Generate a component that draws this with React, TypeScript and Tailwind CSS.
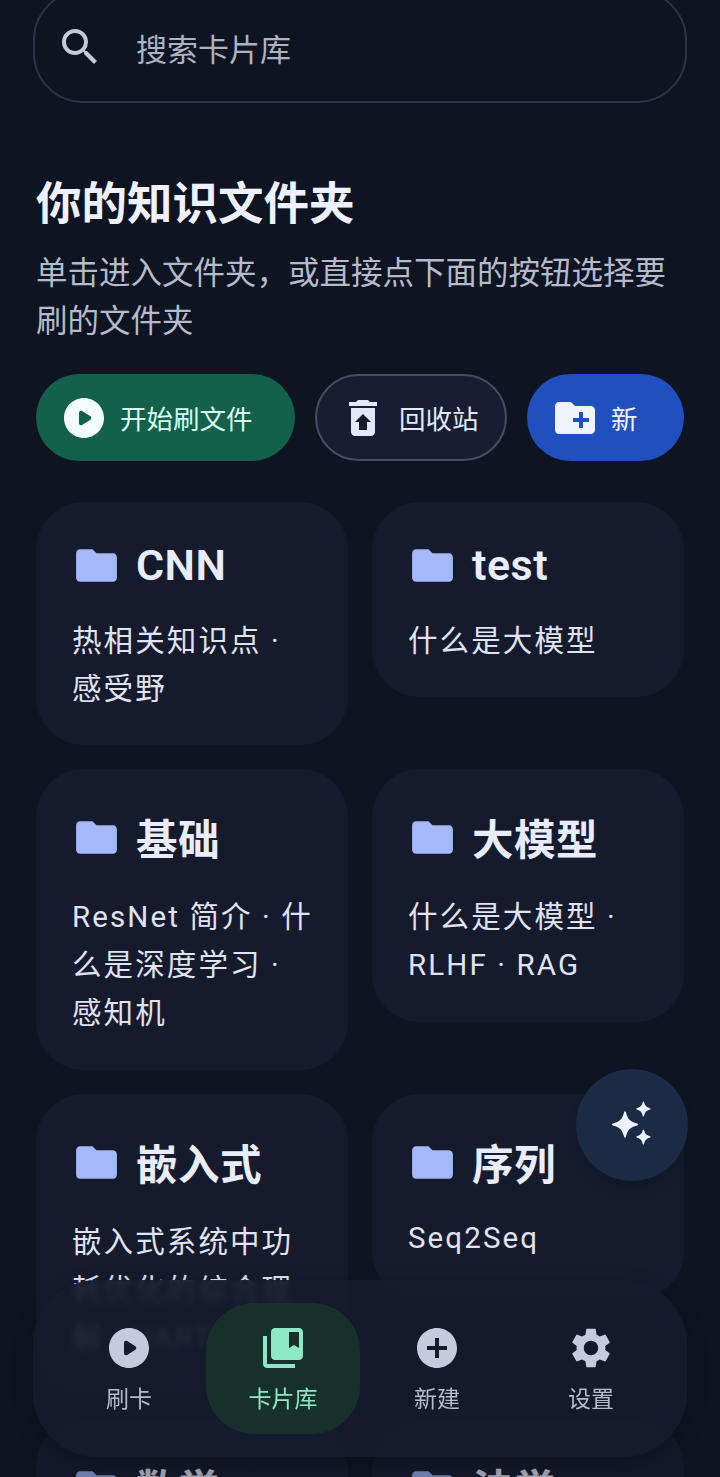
import { MdCollectionsBookmark, MdAddCircle, MdSettings, MdSearch, MdFolder, MdCreateNewFolder, MdRestoreFromTrash } from "react-icons/md"

const font = { fontFamily: 'Roboto, "Noto Sans CJK SC", sans-serif' }

const PlayIcon = ({ className }: { className?: string }) => (
  <svg viewBox="0 0 24 24" fill="currentColor" className={className}>
    <path d="M12 2C6.48 2 2 6.48 2 12s4.48 10 10 10 10-4.48 10-10S17.52 2 12 2zM9.500 14.670V9.330c0-.79.88-1.270 1.540-.84l4.150 2.670c.61.39.61 1.290 0 1.680l-4.150 2.670c-.66.43-1.540-.05-1.540-.84z" />
  </svg>
)

const Sparkles = () => (
  <svg viewBox="0 0 48 48" fill="currentColor" className="w-[48px] h-[48px] text-[#eef3ff]">
    <path d="M17 8.500c1.600 6.600 4.400 9.400 11 11 1.600.4 1.600 1.600 0 2-6.600 1.600-9.400 4.400-11 11-.4 1.600-1.600 1.600-2 0-1.600-6.600-4.400-9.400-11-11-1.600-.4-1.600-1.600 0-2 6.600-1.600 9.400-4.400 11-11 .4-1.600 1.600-1.600 2 0z" transform="translate(1 3)" />
    <path d="M36 1c.9 3.700 2.300 5.100 6 6.300.7.3.7.9 0 1.200-3.700 1.200-5.100 2.600-6 6.500-.2.7-1 .7-1.200 0-.9-3.900-2.300-5.300-6-6.500-.7-.3-.7-.9 0-1.200 3.700-1.200 5.100-2.600 6-6.300.2-.7 1-.7 1.200 0z" />
    <path d="M36 29c.9 3.700 2.300 5.100 6 6.300.7.3.7.9 0 1.200-3.700 1.200-5.100 2.600-6 6.500-.2.700-1 .7-1.200 0-.9-3.900-2.300-5.300-6-6.500-.7-.3-.7-.9 0-1.200 3.700-1.200 5.100-2.600 6-6.300.2-.7 1-.7 1.200 0z" />
  </svg>
)

const folders = [
  { title: "CNN", body: "热相关知识点 · 感受野" },
  { title: "test", body: "什么是大模型" },
  { title: "基础", body: "ResNet 简介 · 什么是深度学习 · 感知机", cjk: true },
  { title: "大模型", body: "什么是大模型 · RLHF · RAG", cjk: true },
  { title: "嵌入式", body: "嵌入式系统中功耗优化的综合理解 · UART", cjk: true },
  { title: "序列", body: "Seq2Seq", cjk: true, latinBody: true },
  { title: "数学", body: "线性代数", cjk: true },
  { title: "法学", body: "民法", cjk: true },
]

const FolderCard = ({ title, body, cjk, latinBody }: { title: string; body: string; cjk?: boolean; latinBody?: boolean }) => (
  <div className={`bg-[#151b2d] rounded-[48px] px-[36px] pt-[39px] ${cjk ? "pb-[33px]" : "pb-[32px]"}`}>
    <div className="flex items-center gap-[15px]">
      <MdFolder className="w-[49px] h-[49px] text-[#a4b8fa] shrink-0" />
      <span
        className={`tracking-[0.5px] font-semibold text-[#e9ecfb] ${
          cjk ? "text-[41.500px] leading-[53px] pt-[6px]" : "text-[43px] leading-[49px]"
        }`}
      >
        {title}
      </span>
    </div>
    <p
      className={`-mr-[3px] text-[29.500px] text-[#e0e3f2] tracking-[2.100px] ${cjk ? "mt-[26px]" : "mt-[27px]"} ${
        latinBody ? "leading-[40px] pb-[8px]" : "leading-[48px]"
      }`}
    >
      {body}
    </p>
  </div>
)

const navItems = [
  { label: "刷卡", icon: <PlayIcon className="w-[48px] h-[48px]" /> },
  { label: "卡片库", icon: <MdCollectionsBookmark className="w-[48px] h-[48px]" />, active: true },
  { label: "新建", icon: <MdAddCircle className="w-[48px] h-[48px]" /> },
  { label: "设置", icon: <MdSettings className="w-[48px] h-[48px]" /> },
]

export default function App() {
  return (
    <div className="relative w-[720px] h-[1477px] overflow-hidden bg-[#0e1422]" style={font}>
      {/* search */}
      <div className="mx-[33px] mt-[-10px] h-[113px] rounded-[50px] border-2 border-[#2f3549] flex items-center pl-[21px]">
        <MdSearch className="w-[48px] h-[48px] text-[#c5c9d8]" />
        <span className="ml-[32px] pt-[10px] text-[31px] text-[#aeb3c2]">搜索卡片库</span>
      </div>

      {/* heading */}
      <div className="mx-[36px] mt-[71px]">
        <h1 className="text-[45.500px] leading-[62px] font-bold text-[#eef1ff]">你的知识文件夹</h1>
        <p className="mt-[14px] text-[31.500px] leading-[48px] text-[#b6bbcb]">单击进入文件夹，或直接点下面的按钮选择要刷的文件夹</p>

        {/* actions */}
        <div className="mt-[28px] flex gap-[20px] h-[87px]">
          <button className="w-[259px] rounded-full bg-[#13614b] flex items-center pl-[24px] gap-[12px] text-[#d9fff0]">
            <PlayIcon className="w-[48px] h-[48px] text-[#f2fffa]" />
            <span className="pt-[4px] text-[26.500px]">开始刷文件</span>
          </button>
          <button className="w-[192px] rounded-full bg-[#181d33] border-2 border-[#484d64] flex items-center pl-[22px] gap-[12px] text-[#e4e8fb]">
            <MdRestoreFromTrash className="w-[48px] h-[48px]" />
            <span className="pt-[4px] text-[26.500px]">回收站</span>
          </button>
          <button className="w-[157px] rounded-full bg-[#2050bf] flex items-center pl-[24px] gap-[12px] text-[#eef3ff]">
            <MdCreateNewFolder className="w-[48px] h-[48px]" />
            <span className="pt-[4px] text-[26.500px]">新</span>
          </button>
        </div>
      </div>

      {/* folders */}
      <div className="mx-[36px] mt-[41px] grid grid-cols-2 gap-x-[24px] gap-y-[24px] items-start">
        {folders.map((f) => (
          <FolderCard key={f.title} title={f.title} body={f.body} cjk={f.cjk} latinBody={f.latinBody} />
        ))}
      </div>

      {/* fade under the nav */}
      <div className="absolute left-0 bottom-0 w-[720px] h-[90px] bg-linear-to-b from-transparent to-[#0e1422]/35" />

      {/* fab */}
      <div className="absolute left-[576px] top-[1069px] w-[112px] h-[112px] rounded-full bg-[#1b2a45] flex items-center justify-center shadow-lg">
        <Sparkles />
      </div>

      {/* bottom nav */}
      <nav className="absolute left-[33px] top-[1280px] w-[654px] h-[177px] rounded-[64px] bg-[#151b2c]/92 backdrop-blur-[3px] shadow-[0_6px_20px_rgba(0,0,0,0.25)] flex items-start pl-[19px] pt-[23px]">
        {navItems.map((item) => (
          <div
            key={item.label}
            className={`w-[154px] h-[131px] rounded-[48px] flex flex-col items-center pt-[21px] ${
              item.active ? "bg-[#17312a] text-[#8ee8c8]" : "text-[#c5cadf]"
            }`}
          >
            {item.icon}
            <span className={`mt-[12px] text-[23px] leading-[32px] ${item.active ? "text-[#8ee8c8]" : "text-[#b7bccd]"}`}>{item.label}</span>
          </div>
        ))}
      </nav>
    </div>
  )
}
